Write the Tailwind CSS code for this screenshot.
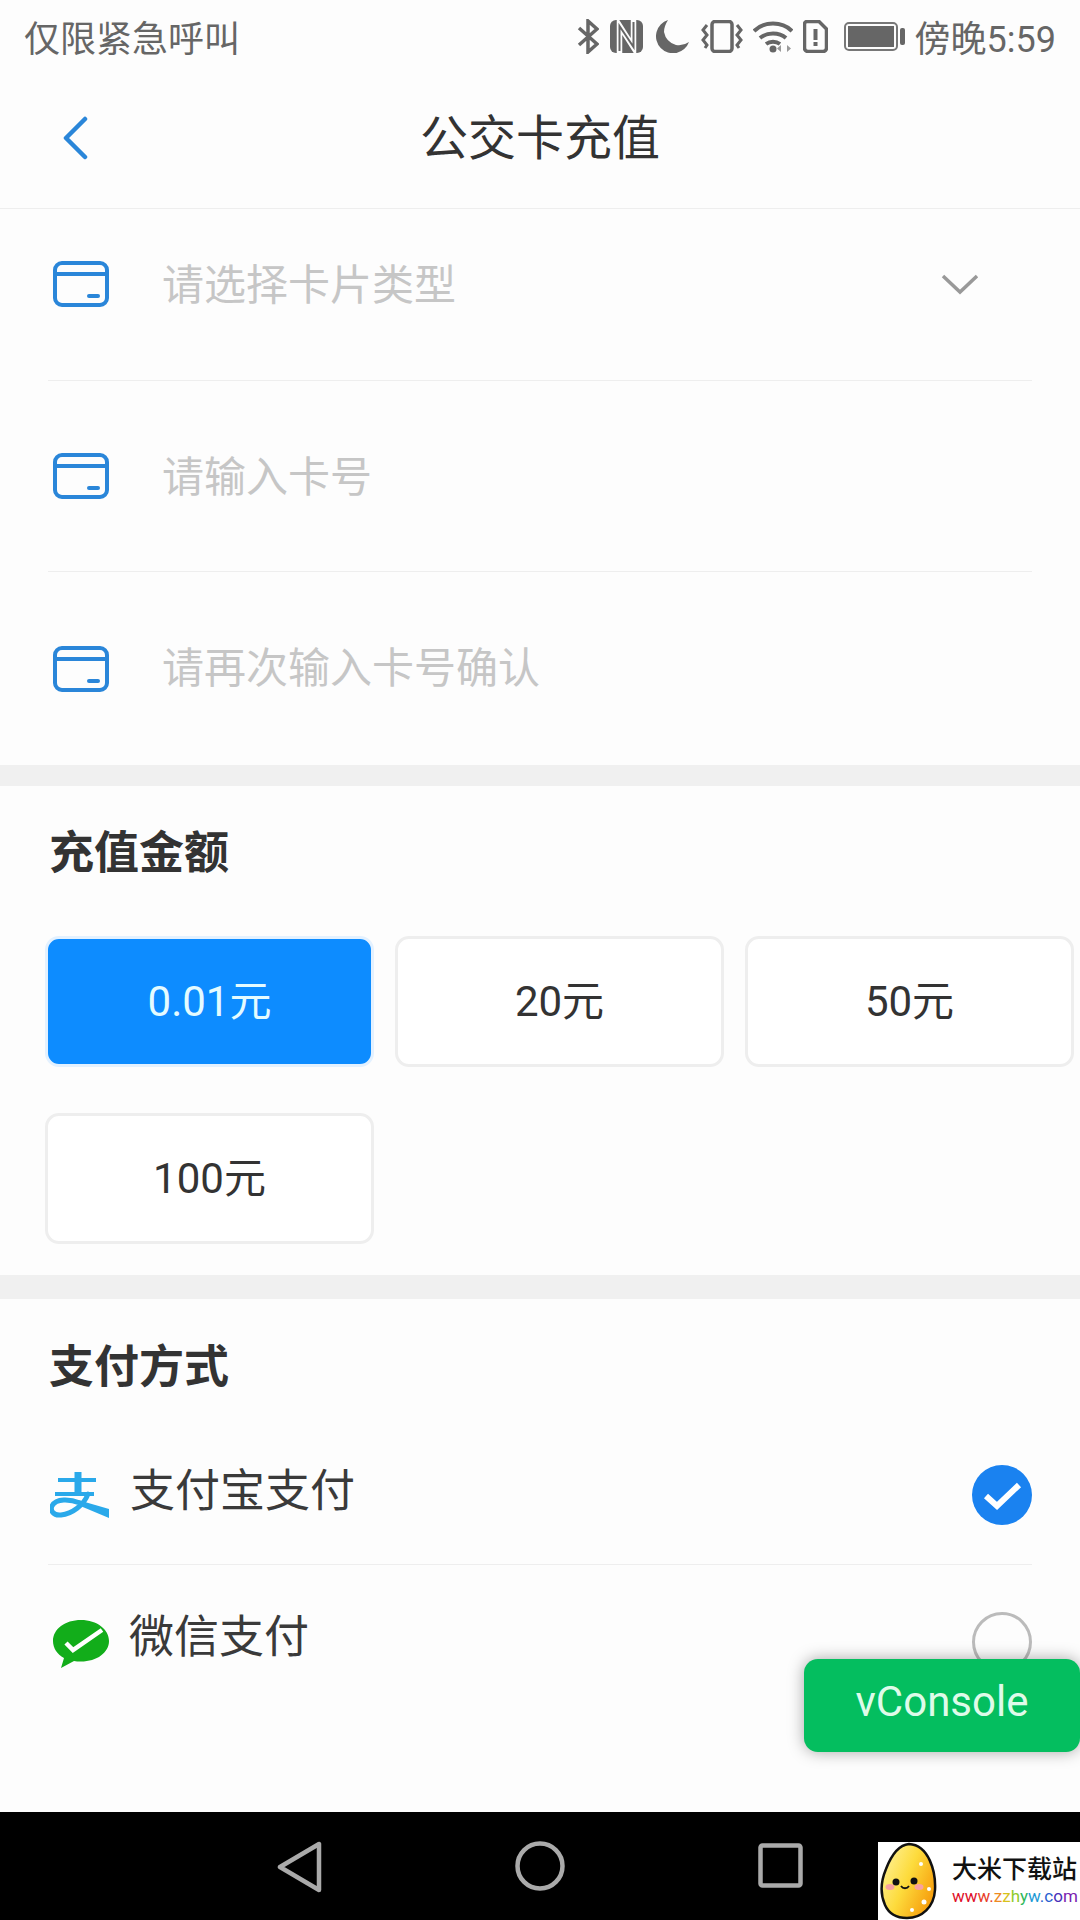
<!DOCTYPE html>
<html lang="zh-CN">
<head>
  <meta charset="UTF-8" />
  <meta name="viewport" content="width=device-width, initial-scale=1.0"/>
  <title>公交卡充值</title>
  <script src="https://cdn.jsdelivr.net/npm/@tailwindcss/browser@4"></script>
</head>
<body class="bg-[#fdfdfd] font-['Roboto','Noto_Sans_CJK_SC',sans-serif]">
  <div class="relative w-[1080px] h-[1920px] overflow-hidden flex flex-col">

    <!-- status bar -->
    <div class="h-[70px] flex items-center pt-[3px] pl-[24px] pr-[24px] text-[#666] text-[36px] leading-[60px] shrink-0">
      <span class="mr-auto pt-[6px]">仅限紧急呼叫</span>
      <!-- bluetooth -->
      <svg class="w-[22px] h-[35px]" viewBox="0 0 22 35" fill="none" stroke="#666" stroke-width="3.500"><path d="M2 9 20 25 11 33V2L20 10 2 26"/></svg>
      <!-- nfc -->
      <svg class="w-[33px] h-[33px] ml-[11px]" viewBox="0 0 33 33"><rect width="33" height="33" rx="6" fill="#666"/><path d="M9.500 33V5.500L23.500 27.500V0" fill="none" stroke="#fdfdfd" stroke-width="5.500"/><path d="M9.500 31V6L23.500 27V2" fill="none" stroke="#666" stroke-width="2"/></svg>
      <!-- moon -->
      <svg class="w-[33px] h-[33px] ml-[13px]" viewBox="0 0 33 33" fill="#666"><path d="M12 0A17 17 0 1 0 33 22 17.500 17.500 0 0 1 20 25 17 17 0 0 1 8 12C8 8 9.500 4 12 0Z"/></svg>
      <!-- vibrate -->
      <svg class="w-[42px] h-[33px] ml-[12px]" viewBox="0 0 42 33" fill="none" stroke="#666"><rect x="11" y="1.500" width="20" height="30" rx="3" stroke-width="3.500"/><path d="M6 5 2 10l4 5-4 5 4 5-2 3M36 5l4 5-4 5 4 5-4 5 2 3" stroke-width="3"/></svg>
      <!-- wifi -->
      <svg class="w-[40px] h-[33px] ml-[10px]" viewBox="0 0 40 33" fill="none" stroke="#666" stroke-width="4"><path d="M1 11C11 1 29 1 39 11M7 18c7-6 19-6 26 0M13 24c4-3 10-3 14 0"/><circle cx="20" cy="29" r="3.500" fill="#666" stroke="none"/><path d="M28 25v7l-4-3.500zM34 25v7l4-3.500z" fill="#999" stroke="none"/></svg>
      <!-- sim alert -->
      <svg class="w-[25px] h-[33px] ml-[10px]" viewBox="0 0 25 33"><path d="M4 1.500H16L23.500 9V28a3.500 3.500 0 0 1-3.500 3.500H5A3.500 3.500 0 0 1 1.500 28V4A2.500 2.500 0 0 1 4 1.500Z" fill="none" stroke="#666" stroke-width="3.500"/><rect x="10.500" y="9" width="4" height="11" fill="#666"/><rect x="10.500" y="22" width="4" height="4" fill="#666"/></svg>
      <!-- battery -->
      <svg class="w-[61px] h-[29px] ml-[16px]" viewBox="0 0 61 29"><rect x="1" y="1" width="52" height="27" rx="4" fill="none" stroke="#777" stroke-width="2"/><rect x="4" y="4" width="46" height="21" fill="#666"/><rect x="56" y="6" width="5" height="17" rx="2" fill="#666"/></svg>
      <span class="ml-[10px] pt-[6px]">傍晚5:59</span>
    </div>

    <!-- header -->
    <div class="relative h-[139px] flex items-center justify-center border-b border-[#eee] shrink-0">
      <svg class="absolute left-[62px] top-[46px] w-[26px] h-[44px]" viewBox="0 0 26 44" fill="none" stroke="#2a86d9" stroke-width="4.500" stroke-linecap="round" stroke-linejoin="round"><path d="M23 3 4 22l19 19"/></svg>
      <h1 class="text-[48px] leading-none text-[#333] font-normal">公交卡充值</h1>
    </div>

    <!-- form -->
    <div class="shrink-0">
      <div class="h-[172px] mx-[48px] pb-[22px] flex items-center border-b border-[#eee]">
        <svg class="w-[56px] h-[46px] ml-[5px]" viewBox="0 0 56 46" fill="none" stroke="#2a86d9" stroke-width="4"><rect x="2" y="2" width="52" height="42" rx="7"/><path d="M2 13h52"/><path d="M36 35h9" stroke-linecap="round"/></svg>
        <span class="ml-[53px] pt-[4px] text-[42px] leading-none text-[#c6c6c6]">请选择卡片类型</span>
        <svg class="ml-auto mr-[53px] w-[38px] h-[22px]" viewBox="0 0 38 22" fill="none" stroke="#999" stroke-width="3.500"><path d="M2 3 19 19 36 3"/></svg>
      </div>
      <div class="h-[191px] mx-[48px] flex items-center border-b border-[#eee]">
        <svg class="w-[56px] h-[46px] ml-[5px]" viewBox="0 0 56 46" fill="none" stroke="#2a86d9" stroke-width="4"><rect x="2" y="2" width="52" height="42" rx="7"/><path d="M2 13h52"/><path d="M36 35h9" stroke-linecap="round"/></svg>
        <span class="ml-[53px] pt-[4px] text-[42px] leading-none text-[#c6c6c6]">请输入卡号</span>
      </div>
      <div class="h-[193px] mx-[48px] flex items-center">
        <svg class="w-[56px] h-[46px] ml-[5px]" viewBox="0 0 56 46" fill="none" stroke="#2a86d9" stroke-width="4"><rect x="2" y="2" width="52" height="42" rx="7"/><path d="M2 13h52"/><path d="M36 35h9" stroke-linecap="round"/></svg>
        <span class="ml-[53px] pt-[1px] text-[42px] leading-none text-[#c6c6c6]">请再次输入卡号确认</span>
      </div>
    </div>
    <div class="h-[21px] bg-[#f0f0f0] shrink-0"></div>

    <!-- amount -->
    <div class="pt-[35px] pb-[31px] shrink-0">
      <h2 class="pl-[49px] text-[45px] leading-[66px] font-bold text-[#333]">充值金额</h2>
      <div class="mt-[49px] pl-[45px] grid grid-cols-[329px_329px_329px] gap-x-[21px] gap-y-[46px] text-[42px]">
        <div class="h-[131px] flex items-center justify-center rounded-[14px] bg-[#0d8cff] border-[3px] border-[#e3f1ff] text-[#e4fbff]">0.01元</div>
        <div class="h-[131px] flex items-center justify-center rounded-[14px] bg-white border-[3px] border-[#eee] text-[#333]">20元</div>
        <div class="h-[131px] flex items-center justify-center rounded-[14px] bg-white border-[3px] border-[#eee] text-[#333]">50元</div>
        <div class="h-[131px] flex items-center justify-center rounded-[14px] bg-white border-[3px] border-[#eee] text-[#333]">100元</div>
      </div>
    </div>
    <div class="h-[24px] bg-[#f0f0f0] shrink-0"></div>

    <!-- pay method -->
    <div class="pt-[36px] flex-1">
      <h2 class="pl-[49px] text-[45px] leading-[66px] font-bold text-[#333]">支付方式</h2>
      <div class="h-[164px] mx-[48px] pt-[25px] flex items-center border-b border-[#eee]">
        <svg class="w-[60px] h-[46px] ml-[2px] shrink-0" viewBox="0 0 60 46" fill="none" stroke="#2aa9ea">
          <path d="M8 8h38M5 22h39" stroke-width="4"/>
          <path d="M28 0v22" stroke-width="7"/>
          <path d="M38 22C34 33 22 42 11 43 3 44 0 38 2 34 6 26 20 27 30 31" stroke-width="5" stroke-linecap="round"/>
          <path d="M28 28 59 37V46L28 33Z" fill="#2aa9ea" stroke="none"/>
        </svg>
        <span class="ml-[20px] mb-[8px] text-[45px] leading-none text-[#3a3a3a]">支付宝支付</span>
        <svg class="ml-auto w-[60px] h-[60px]" viewBox="0 0 60 60"><circle cx="30" cy="30" r="30" fill="#1a82f0"/><path d="M14 31 25 41 47 20" fill="none" stroke="#fff" stroke-width="6"/></svg>
      </div>
      <div class="h-[154px] mx-[48px] flex items-center">
        <svg class="w-[58px] h-[49px] ml-[4px] mt-[4px] shrink-0" viewBox="0 0 58 49"><path d="M29 0C13 0 1 9 1 21c0 7 4 13 11 17l-3 10 13-7c2 .4 4 .5 7 .5 16 0 28-9 28-20.500S45 0 29 0Z" fill="#12ad1a"/><path d="M14 23 21 30 50 10" fill="none" stroke="#fff" stroke-width="4.500"/></svg>
        <span class="ml-[19px] mb-[10px] text-[45px] leading-none text-[#3a3a3a]">微信支付</span>
        <span class="ml-auto w-[60px] h-[60px] rounded-full border-[3px] border-[#bbb]"></span>
      </div>
    </div>

    <!-- nav bar -->
    <div class="h-[108px] bg-black shrink-0 relative">
      <svg class="absolute left-[277px] top-[29px] w-[46px] h-[52px]" viewBox="0 0 46 52" fill="none" stroke="#aaa" stroke-width="4.500" stroke-linejoin="round"><path d="M42 3V49L3 26Z"/></svg>
      <svg class="absolute left-[515px] top-[29px] w-[50px] h-[50px]" viewBox="0 0 50 50" fill="none" stroke="#aaa" stroke-width="4.500"><circle cx="25" cy="25" r="22.500"/></svg>
      <svg class="absolute left-[758px] top-[31px] w-[45px] h-[45px]" viewBox="0 0 45 45" fill="none" stroke="#aaa" stroke-width="4.500"><rect x="2.500" y="2.500" width="40" height="40" rx="2"/></svg>
    </div>

    <!-- vConsole button -->
    <div class="absolute left-[804px] top-[1659px] w-[276px] h-[93px] pb-[7px] rounded-[14px] bg-[#04be5f] shadow-[0_0_16px_rgba(0,0,0,0.35)] flex items-center justify-center text-[#dffbe9] text-[42px] leading-none">vConsole</div>

    <!-- watermark -->
    <div class="absolute left-[878px] top-[1842px] w-[202px] h-[78px] bg-white flex items-center overflow-hidden">
      <svg class="w-[58px] h-[78px] ml-[1px] shrink-0" viewBox="0 0 58 78">
        <defs>
          <linearGradient id="rice" x1="0" y1="0" x2="1" y2="0.600"><stop offset="0" stop-color="#fff6a8"/><stop offset="0.550" stop-color="#fddb3c"/><stop offset="1" stop-color="#f7a10f"/></linearGradient>
        </defs>
        <path d="M30 2C19 3 12 14 7 27 2 39 1 52 6 63c4 9 12 13 22 13 15 0 27-11 28-28C57 30 50 3 30 2Z" fill="url(#rice)" stroke="#111" stroke-width="2.500"/>
        <circle cx="17" cy="40" r="3.500" fill="#111"/><circle cx="35" cy="39" r="3.500" fill="#111"/>
        <path d="M22 44c2 3 6 3 8 0" fill="none" stroke="#111" stroke-width="1.800"/>
        <ellipse cx="11" cy="45" rx="4.500" ry="3" fill="#f8a0a0"/><ellipse cx="40" cy="45" rx="4.500" ry="3" fill="#f8a0a0"/>
        <circle cx="42" cy="22" r="2" fill="#fff"/><circle cx="50" cy="47" r="2" fill="#fff"/><circle cx="45" cy="60" r="2.500" fill="#fff"/><circle cx="33" cy="68" r="2" fill="#fff"/>
      </svg>
      <div class="ml-[15px] flex flex-col">
        <span class="text-[25px] leading-[30px] font-medium text-[#111] whitespace-nowrap">大米下载站</span>
        <span class="text-[17px] leading-[22px] whitespace-nowrap"><span class="text-[#e0102a]">ww</span><span class="text-[#e8402a]">w.</span><span class="text-[#ee8a22]">z</span><span class="text-[#d8c21c]">z</span><span class="text-[#8ecb2a]">h</span><span class="text-[#2fb85a]">y</span><span class="text-[#1d9ad6]">w</span><span class="text-[#2a5fd0]">.c</span><span class="text-[#4a30b8]">o</span><span class="text-[#7a22b0]">m</span></span>
      </div>
    </div>
  </div>
</body>
</html>
